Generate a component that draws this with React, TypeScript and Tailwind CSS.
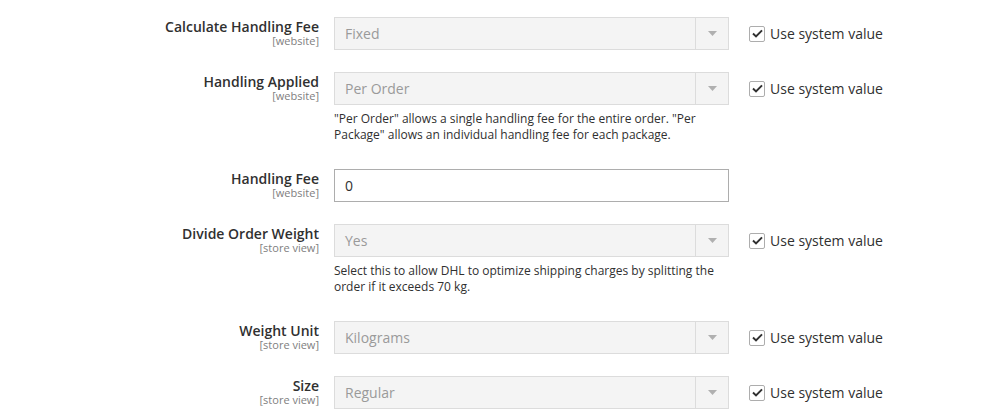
import React from "react";

type Row = {
  label: string;
  scope: string;
  value: string;
  kind: "select" | "input";
  help?: string;
  inherit?: boolean;
};

const rows: Row[] = [
  { label: "Calculate Handling Fee", scope: "[website]", value: "Fixed", kind: "select", inherit: true },
  {
    label: "Handling Applied",
    scope: "[website]",
    value: "Per Order",
    kind: "select",
    inherit: true,
    help: '"Per Order" allows a single handling fee for the entire order. "Per Package" allows an individual handling fee for each package.',
  },
  { label: "Handling Fee", scope: "[website]", value: "0", kind: "input" },
  {
    label: "Divide Order Weight",
    scope: "[store view]",
    value: "Yes",
    kind: "select",
    inherit: true,
    help: "Select this to allow DHL to optimize shipping charges by splitting the order if it exceeds 70 kg.",
  },
  { label: "Weight Unit", scope: "[store view]", value: "Kilograms", kind: "select", inherit: true },
  { label: "Size", scope: "[store view]", value: "Regular", kind: "select", inherit: true },
];

function Checkbox() {
  return (
    <span className="flex h-[16px] w-[16px] items-center justify-center rounded-[2px] border border-[#adadad] bg-white">
      <svg width="11" height="9" viewBox="0 0 11 9">
        <path d="M1 4.6 L4 7.4 L10 1.4" fill="none" stroke="#303030" strokeWidth="2" />
      </svg>
    </span>
  );
}

function Field({ row }: { row: Row }) {
  return (
    <div className="flex items-start">
      <div className="w-[319px] pt-[2px] text-right">
        <div className="text-[14px] leading-[16px] font-semibold text-[#303030]">{row.label}</div>
        <div className="text-[11px] leading-[12px] text-[#808080]">{row.scope}</div>
      </div>
      <div className="ml-[15px] w-[395px]">
        {row.kind === "select" ? (
          <div className="flex h-[33px] items-center border border-[#dcdcdc] bg-[#f4f4f4]">
            <span className="flex-1 pl-[10px] text-[14px] text-[#9a9a9a]">{row.value}</span>
            <span className="flex h-full w-[33px] items-center justify-center border-l border-[#dcdcdc]">
              <svg width="9" height="5" viewBox="0 0 9 5">
                <path d="M0 0 H9 L4.5 5 Z" fill="#b0b0b0" />
              </svg>
            </span>
          </div>
        ) : (
          <div className="flex h-[33px] items-center border border-[#adadad] bg-white pl-[10px] text-[14px] text-[#303030]">
            {row.value}
          </div>
        )}
        {row.help && (
          <p className="mt-[6px] mb-[4px] text-[12px] leading-[16px] text-[#303030]">{row.help}</p>
        )}
      </div>
      {row.inherit && (
        <label className="ml-[20px] flex h-[33px] items-center gap-[5px] text-[14px] text-[#303030]">
          <Checkbox />
          Use system value
        </label>
      )}
    </div>
  );
}

export default function App() {
  return (
    <div
      className="min-h-[417px] w-[996px] bg-white pt-[17px]"
      style={{ fontFamily: '"Open Sans", "Noto Sans", sans-serif' }}
    >
      <div className="flex flex-col gap-[22px]">
        {rows.map((r) => (
          <Field key={r.label} row={r} />
        ))}
      </div>
    </div>
  );
}
